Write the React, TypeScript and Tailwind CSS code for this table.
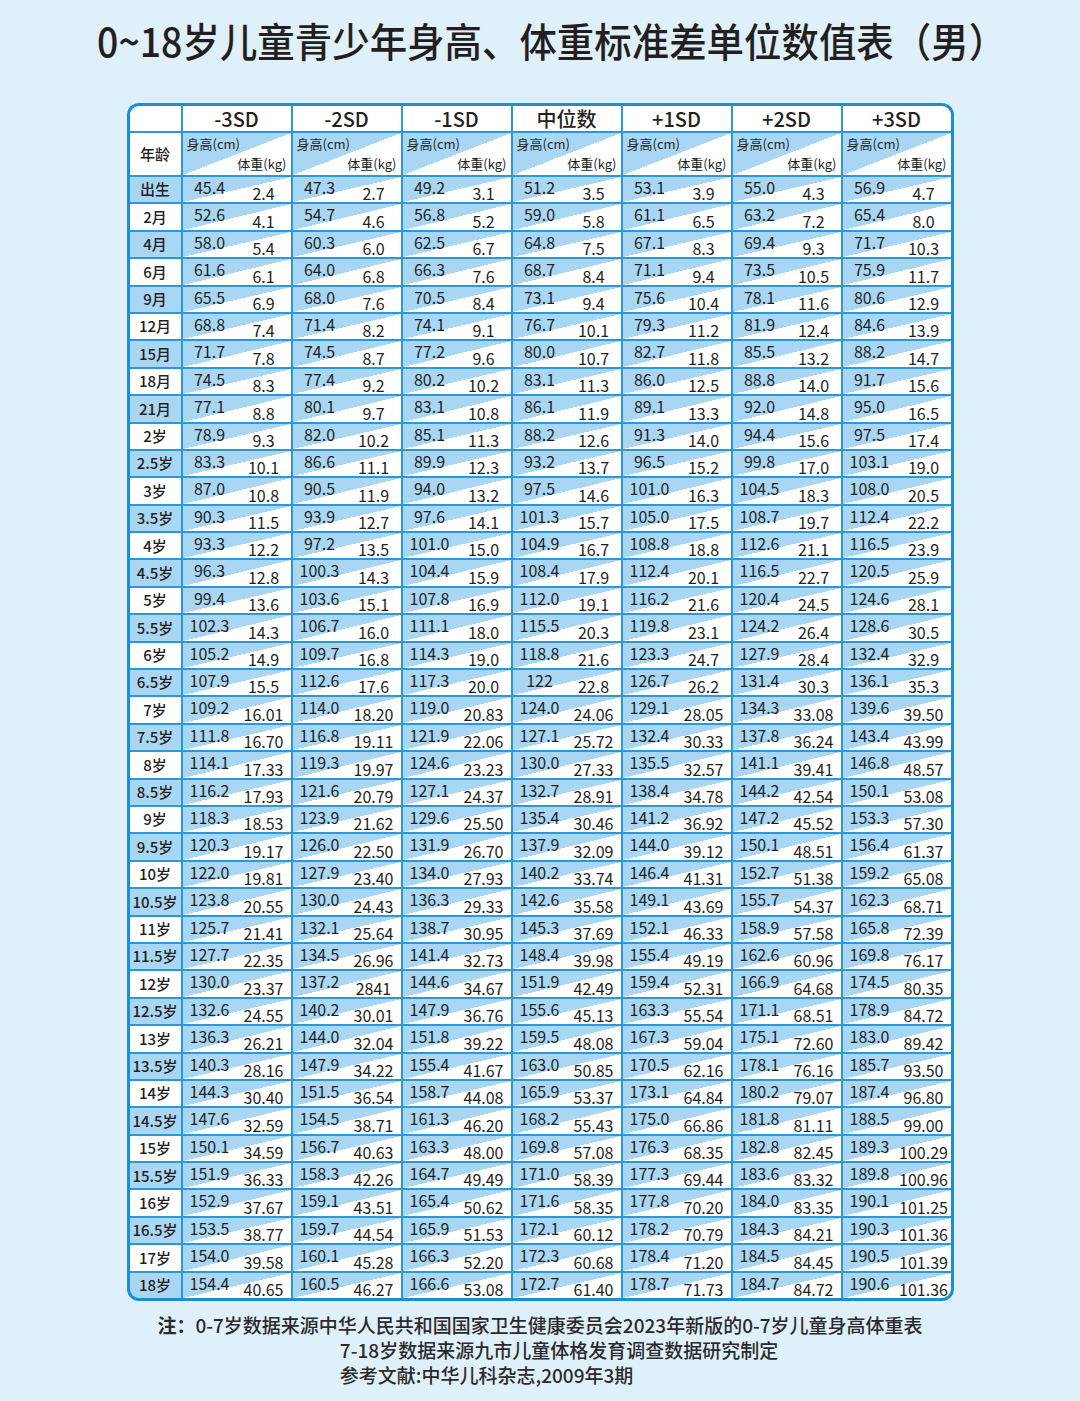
import React from 'react';

const cols = ['-3SD', '-2SD', '-1SD', '中位数', '+1SD', '+2SD', '+3SD'];

const rows: [string, string][] = [
  ['出生', '45.4 2.4 47.3 2.7 49.2 3.1 51.2 3.5 53.1 3.9 55.0 4.3 56.9 4.7'],
  ['2月', '52.6 4.1 54.7 4.6 56.8 5.2 59.0 5.8 61.1 6.5 63.2 7.2 65.4 8.0'],
  ['4月', '58.0 5.4 60.3 6.0 62.5 6.7 64.8 7.5 67.1 8.3 69.4 9.3 71.7 10.3'],
  ['6月', '61.6 6.1 64.0 6.8 66.3 7.6 68.7 8.4 71.1 9.4 73.5 10.5 75.9 11.7'],
  ['9月', '65.5 6.9 68.0 7.6 70.5 8.4 73.1 9.4 75.6 10.4 78.1 11.6 80.6 12.9'],
  ['12月', '68.8 7.4 71.4 8.2 74.1 9.1 76.7 10.1 79.3 11.2 81.9 12.4 84.6 13.9'],
  ['15月', '71.7 7.8 74.5 8.7 77.2 9.6 80.0 10.7 82.7 11.8 85.5 13.2 88.2 14.7'],
  ['18月', '74.5 8.3 77.4 9.2 80.2 10.2 83.1 11.3 86.0 12.5 88.8 14.0 91.7 15.6'],
  ['21月', '77.1 8.8 80.1 9.7 83.1 10.8 86.1 11.9 89.1 13.3 92.0 14.8 95.0 16.5'],
  ['2岁', '78.9 9.3 82.0 10.2 85.1 11.3 88.2 12.6 91.3 14.0 94.4 15.6 97.5 17.4'],
  ['2.5岁', '83.3 10.1 86.6 11.1 89.9 12.3 93.2 13.7 96.5 15.2 99.8 17.0 103.1 19.0'],
  ['3岁', '87.0 10.8 90.5 11.9 94.0 13.2 97.5 14.6 101.0 16.3 104.5 18.3 108.0 20.5'],
  ['3.5岁', '90.3 11.5 93.9 12.7 97.6 14.1 101.3 15.7 105.0 17.5 108.7 19.7 112.4 22.2'],
  ['4岁', '93.3 12.2 97.2 13.5 101.0 15.0 104.9 16.7 108.8 18.8 112.6 21.1 116.5 23.9'],
  ['4.5岁', '96.3 12.8 100.3 14.3 104.4 15.9 108.4 17.9 112.4 20.1 116.5 22.7 120.5 25.9'],
  ['5岁', '99.4 13.6 103.6 15.1 107.8 16.9 112.0 19.1 116.2 21.6 120.4 24.5 124.6 28.1'],
  ['5.5岁', '102.3 14.3 106.7 16.0 111.1 18.0 115.5 20.3 119.8 23.1 124.2 26.4 128.6 30.5'],
  ['6岁', '105.2 14.9 109.7 16.8 114.3 19.0 118.8 21.6 123.3 24.7 127.9 28.4 132.4 32.9'],
  ['6.5岁', '107.9 15.5 112.6 17.6 117.3 20.0 122 22.8 126.7 26.2 131.4 30.3 136.1 35.3'],
  ['7岁', '109.2 16.01 114.0 18.20 119.0 20.83 124.0 24.06 129.1 28.05 134.3 33.08 139.6 39.50'],
  ['7.5岁', '111.8 16.70 116.8 19.11 121.9 22.06 127.1 25.72 132.4 30.33 137.8 36.24 143.4 43.99'],
  ['8岁', '114.1 17.33 119.3 19.97 124.6 23.23 130.0 27.33 135.5 32.57 141.1 39.41 146.8 48.57'],
  ['8.5岁', '116.2 17.93 121.6 20.79 127.1 24.37 132.7 28.91 138.4 34.78 144.2 42.54 150.1 53.08'],
  ['9岁', '118.3 18.53 123.9 21.62 129.6 25.50 135.4 30.46 141.2 36.92 147.2 45.52 153.3 57.30'],
  ['9.5岁', '120.3 19.17 126.0 22.50 131.9 26.70 137.9 32.09 144.0 39.12 150.1 48.51 156.4 61.37'],
  ['10岁', '122.0 19.81 127.9 23.40 134.0 27.93 140.2 33.74 146.4 41.31 152.7 51.38 159.2 65.08'],
  ['10.5岁', '123.8 20.55 130.0 24.43 136.3 29.33 142.6 35.58 149.1 43.69 155.7 54.37 162.3 68.71'],
  ['11岁', '125.7 21.41 132.1 25.64 138.7 30.95 145.3 37.69 152.1 46.33 158.9 57.58 165.8 72.39'],
  ['11.5岁', '127.7 22.35 134.5 26.96 141.4 32.73 148.4 39.98 155.4 49.19 162.6 60.96 169.8 76.17'],
  ['12岁', '130.0 23.37 137.2 2841 144.6 34.67 151.9 42.49 159.4 52.31 166.9 64.68 174.5 80.35'],
  ['12.5岁', '132.6 24.55 140.2 30.01 147.9 36.76 155.6 45.13 163.3 55.54 171.1 68.51 178.9 84.72'],
  ['13岁', '136.3 26.21 144.0 32.04 151.8 39.22 159.5 48.08 167.3 59.04 175.1 72.60 183.0 89.42'],
  ['13.5岁', '140.3 28.16 147.9 34.22 155.4 41.67 163.0 50.85 170.5 62.16 178.1 76.16 185.7 93.50'],
  ['14岁', '144.3 30.40 151.5 36.54 158.7 44.08 165.9 53.37 173.1 64.84 180.2 79.07 187.4 96.80'],
  ['14.5岁', '147.6 32.59 154.5 38.71 161.3 46.20 168.2 55.43 175.0 66.86 181.8 81.11 188.5 99.00'],
  ['15岁', '150.1 34.59 156.7 40.63 163.3 48.00 169.8 57.08 176.3 68.35 182.8 82.45 189.3 100.29'],
  ['15.5岁', '151.9 36.33 158.3 42.26 164.7 49.49 171.0 58.39 177.3 69.44 183.6 83.32 189.8 100.96'],
  ['16岁', '152.9 37.67 159.1 43.51 165.4 50.62 171.6 58.35 177.8 70.20 184.0 83.35 190.1 101.25'],
  ['16.5岁', '153.5 38.77 159.7 44.54 165.9 51.53 172.1 60.12 178.2 70.79 184.3 84.21 190.3 101.36'],
  ['17岁', '154.0 39.58 160.1 45.28 166.3 52.20 172.3 60.68 178.4 71.20 184.5 84.45 190.5 101.39'],
  ['18岁', '154.4 40.65 160.5 46.27 166.6 53.08 172.7 61.40 178.7 71.73 184.7 84.72 190.6 101.36'],
];

const diag = 'bg-[linear-gradient(to_bottom_right,#a9d7f3_50%,#ffffff_50%)]';

function DataCell({ height, weight }: { height: string; weight: string }) {
  return (
    <div className={`flex h-[25.4px] ${diag} text-[16px] text-[#231f20]`}>
      <span className="w-1/2 self-start text-center leading-[20px]">{height}</span>
      <span className="w-1/2 self-end text-center leading-[17px]">{weight}</span>
    </div>
  );
}

export default function App() {
  return (
    <div className="min-h-[1401px] bg-[#dff0fa] font-['Noto_Sans_CJK_SC','Noto_Sans',sans-serif] text-[#231f20]">
      <div className="flex h-[80px] items-center justify-center pl-[24px]">
        <span className="inline-block scale-x-[0.936] whitespace-nowrap text-[40px] font-medium">
          0~18岁儿童青少年身高、体重标准差单位数值表（男）
        </span>
      </div>

      <div className="mx-auto mt-[23px] w-[827px] overflow-hidden rounded-[12px] border-[3px] border-[#1b8fd6] bg-[#2b98d8]">
        <div className="grid grid-cols-[51px_repeat(7,108px)] gap-[2px]">
          <div className="h-[25px] bg-white" />
          {cols.map((c) => (
            <div key={c} className="flex h-[25px] items-center justify-center bg-white text-[20px] font-medium leading-none">
              {c}
            </div>
          ))}

          <div className="flex h-[42px] items-center justify-center bg-white text-[15px] font-medium">年龄</div>
          {cols.map((c) => (
            <div key={c} className={`flex h-[42px] flex-col justify-between ${diag} px-[4px] py-[2px] text-[13px] leading-[18px]`}>
              <span className="self-start">身高(cm)</span>
              <span className="self-end">体重(kg)</span>
            </div>
          ))}

          {rows.map(([age, vals], i) => {
            const v = vals.split(' ');
            return (
              <React.Fragment key={age}>
                <div
                  className={`flex h-[25.4px] items-center justify-center text-[15px] font-medium ${
                    i % 2 === 0 ? 'bg-[#a9d7f3]' : 'bg-white'
                  }`}
                >
                  {age}
                </div>
                {cols.map((c, j) => (
                  <DataCell key={c} height={v[j * 2]} weight={v[j * 2 + 1]} />
                ))}
              </React.Fragment>
            );
          })}
        </div>
      </div>

      <div className="mt-[11px] flex justify-center text-[19px] font-medium leading-[25px] text-[#2b2b2b]">
        <span className="font-bold">注：</span>
        <div className="flex flex-col items-center">
          <div>0-7岁数据来源中华人民共和国国家卫生健康委员会2023年新版的0-7岁儿童身高体重表</div>
          <div className="text-left">
            <div>7-18岁数据来源九市儿童体格发育调查数据研究制定</div>
            <div>参考文献:中华儿科杂志,2009年3期</div>
          </div>
        </div>
      </div>
    </div>
  );
}
